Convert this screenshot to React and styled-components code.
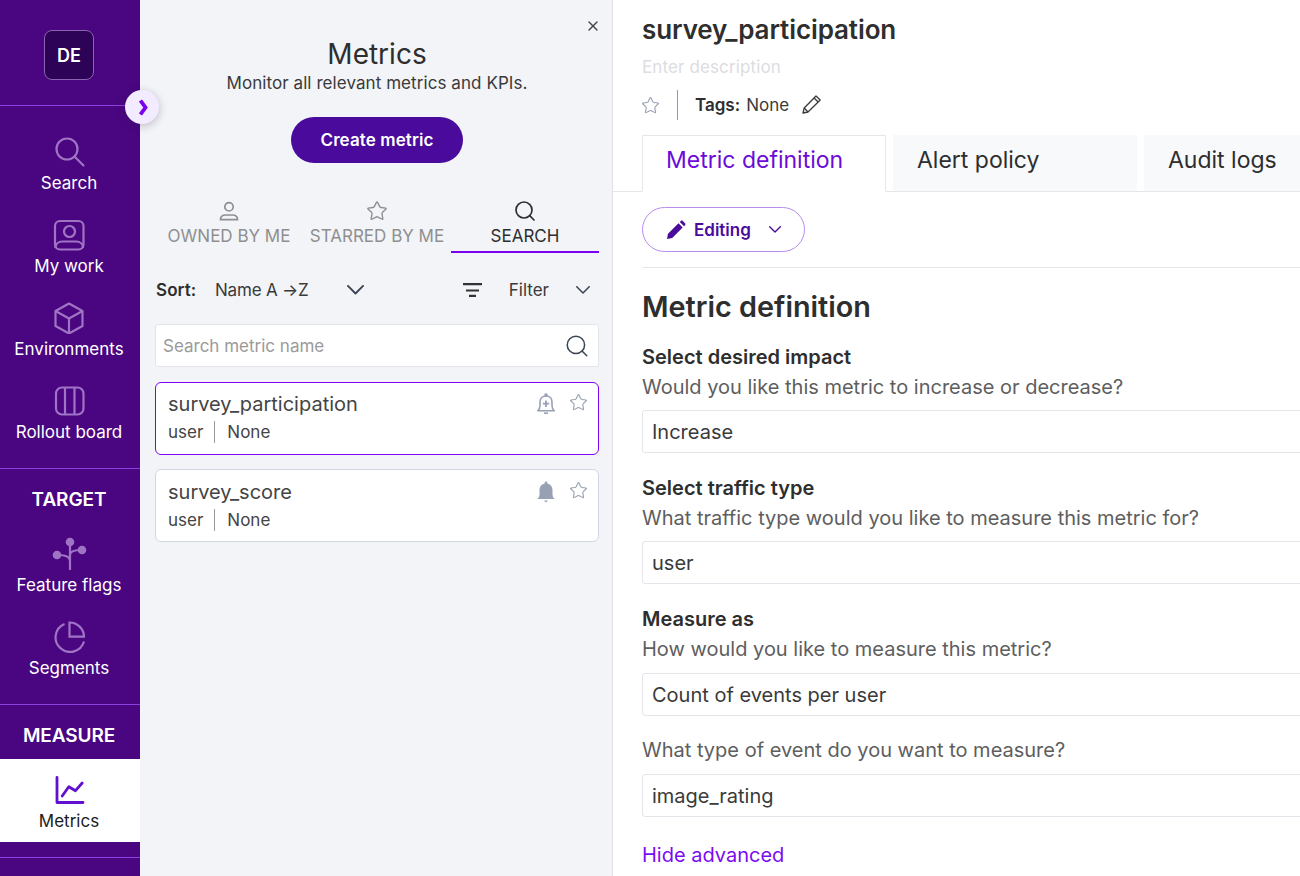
import React from "react"
import styled, { createGlobalStyle } from "styled-components"
import { Search, Star, X } from "lucide-react"

const GlobalStyle = createGlobalStyle`
  html, body {
    margin: 0;
    padding: 0;
    height: 100%;
    overflow: hidden;
    background: #fff;
    font-family: Inter, "Liberation Sans", sans-serif;
    color: #2e2e2e;
  }
  * { box-sizing: border-box; }
`

const Page = styled.div`
  display: flex;
  width: 1300px;
  height: 876px;
  overflow: hidden;
`

const Sidebar = styled.nav`
  position: relative;
  z-index: 2;
  flex: 0 0 140px;
  display: flex;
  flex-direction: column;
  background: #4a0681;
  color: #fff;
`

const LogoArea = styled.div`
  height: 106px;
  padding: 30px 2px 0 0;
  display: flex;
  justify-content: center;
  border-bottom: 1px solid #8a3fe0;
`

const Logo = styled.div`
  width: 50px;
  height: 50px;
  display: flex;
  align-items: center;
  justify-content: center;
  border: 1px solid #8a62ad;
  border-radius: 8px;
  background: #2c0356;
  font-size: 18px;
  font-weight: 600;
`

const Toggle = styled.div`
  position: absolute;
  top: 90px;
  left: 125px;
  width: 34px;
  height: 34px;
  padding-left: 2px;
  display: flex;
  align-items: center;
  justify-content: center;
  border-radius: 50%;
  background: #f3ebff;
  box-shadow: 0 2px 8px rgba(30, 20, 60, 0.25);
`

const NavGroup = styled.div`
  padding-top: ${(p) => p.$top || 0}px;
  padding-bottom: ${(p) => p.$bottom || 0}px;
  border-bottom: ${(p) => (p.$line ? "1px solid #8a3fe0" : "none")};
`

const NavItem = styled.div`
  height: 83px;
  display: flex;
  flex-direction: column;
  align-items: center;
  padding: 11px 2px 0 0;
  background: ${(p) => (p.$active ? "#fff" : "transparent")};
  color: ${(p) => (p.$active ? "#1c1c1c" : "#fff")};
  font-size: 17px;
  line-height: 20px;
`

const NavIcon = styled.div`
  width: 36px;
  height: 36px;
  margin-bottom: 5px;
  color: ${(p) => (p.$active ? "#5f10d0" : "#a074c4")};
`

const SectionTitle = styled.div`
  height: 54px;
  padding: 20px 2px 0 0;
  text-align: center;
  font-size: 19px;
  line-height: 22px;
  font-weight: 600;
  letter-spacing: -0.1px;
`

const Panel = styled.section`
  position: relative;
  flex: 0 0 473px;
  padding: 0 13px 0 15px;
  background: #f2f4f8;
  border-right: 1px solid #dfe1e6;
`

const CloseButton = styled.div`
  position: absolute;
  top: 18px;
  right: 11px;
  color: #444;
  display: flex;
`

const PanelHead = styled.header`
  padding-top: 36px;
  display: flex;
  flex-direction: column;
  align-items: center;
`

const PanelTitle = styled.h2`
  margin: 0;
  font-size: 28px;
  line-height: 36px;
  font-weight: 400;
  color: #2e2e2e;
`

const PanelSub = styled.p`
  margin: 0;
  font-size: 17px;
  line-height: 22px;
  letter-spacing: 0.07px;
  color: #3a3a3a;
`

const CreateButton = styled.button`
  margin-top: 23px;
  width: 172px;
  height: 46px;
  border: none;
  border-radius: 23px;
  background: #4a0a9c;
  color: #fff;
  font-family: inherit;
  font-size: 17px;
  letter-spacing: 0.1px;
  font-weight: 600;
`

const Tabs = styled.div`
  display: grid;
  grid-template-columns: repeat(3, 148px);
  margin-top: 37px;
`

const Tab = styled.div`
  height: 53px;
  display: flex;
  flex-direction: column;
  align-items: center;
  border-bottom: 2px solid ${(p) => (p.$active ? "#7a00f0" : "transparent")};
  color: ${(p) => (p.$active ? "#2e2e2e" : "#8f8f8f")};
  font-size: 17px;
  line-height: 20px;
`

const TabIcon = styled.div`
  height: 22px;
  margin-bottom: 4px;
  display: flex;
  align-items: center;
`

const SortRow = styled.div`
  height: 36px;
  margin-top: 19px;
  padding: 0 9px 0 1px;
  display: flex;
  align-items: center;
  font-size: 17px;
  color: #3a3a3a;
`

const SortLabel = styled.b`
  font-weight: 600;
  width: 59px;
  letter-spacing: 0.1px;
  color: #2e2e2e;
`

const SortValue = styled.span`
  width: 132px;
  letter-spacing: -0.2px;
`

const Spacer = styled.div`
  flex: 1;
`

const FilterText = styled.span`
  margin: 0 27px;
`

const SearchBox = styled.div`
  height: 43px;
  margin-top: 16px;
  padding: 1px 8px 0 7px;
  display: flex;
  align-items: center;
  justify-content: space-between;
  background: #fff;
  border: 1px solid #e3e5ea;
  border-radius: 3px;
  font-size: 17px;
  color: #9a9a9a;
`

const Card = styled.div`
  height: 73px;
  margin-top: ${(p) => p.$top}px;
  padding: ${(p) => (p.$active ? 9 : 10)}px 10px 0 12px;
  background: #fff;
  border: 1px solid ${(p) => (p.$active ? "#8000f0" : "#d3d6e0")};
  border-radius: 6px;
`

const CardTop = styled.div`
  display: flex;
  align-items: center;
  height: 24px;
  gap: 14px;
  font-size: 20px;
  color: #444;
`

const CardName = styled.span`
  flex: 1;
`

const CardStar = styled.span`
  display: flex;
  margin-top: -3px;
`

const CardMeta = styled.div`
  display: flex;
  align-items: center;
  margin-top: 5px;
  font-size: 17px;
  line-height: 22px;
  color: #444;
`

const MetaDivider = styled.span`
  width: 1px;
  height: 22px;
  margin: 0 12px 0 11px;
  background: #9a9a9a;
`

const Main = styled.main`
  flex: 1;
  min-width: 0;
  overflow: hidden;
  background: #fff;
`

const MainHead = styled.div`
  padding: 14px 0 0 29px;
`

const MetricName = styled.h1`
  margin: 0;
  font-size: 26px;
  line-height: 32px;
  letter-spacing: -0.1px;
  font-weight: 600;
  color: #2e2e2e;
`

const Description = styled.div`
  margin-top: 9px;
  font-size: 17px;
  line-height: 24px;
  letter-spacing: 0.12px;
  color: #dcdce2;
`

const TagRow = styled.div`
  display: flex;
  align-items: center;
  height: 30px;
  margin: 11px 0 0 -1px;
  font-size: 17px;
  color: #3a3a3a;
`

const TagDivider = styled.span`
  width: 1px;
  height: 30px;
  margin: 0 17px;
  background: #9a9a9a;
`

const TagLabel = styled.b`
  font-weight: 600;
  margin-right: 6px;
  color: #2e2e2e;
`

const TagEdit = styled.span`
  display: flex;
  margin: -2px 0 0 13px;
`

const MainTabs = styled.div`
  display: flex;
  gap: 7px;
  height: 57px;
  margin-top: 15px;
  padding-left: 29px;
  border-bottom: 1px solid #e4e6ea;
`

const MainTab = styled.div`
  flex: 0 0 244px;
  height: ${(p) => (p.$active ? 57 : 56)}px;
  padding: ${(p) => (p.$active ? "9px 0 0 23px" : "10px 0 0 24px")};
  font-size: 23px;
  line-height: 30px;
  background: ${(p) => (p.$active ? "#fff" : "#f8f9fb")};
  border: ${(p) => (p.$active ? "1px solid #e4e6ea" : "none")};
  border-bottom: ${(p) => (p.$active ? "1px solid #fff" : "none")};
  color: ${(p) => (p.$active ? "#6a0bd8" : "#2e2e2e")};
`

const Toolbar = styled.div`
  margin-left: 29px;
  height: 76px;
  padding-top: 15px;
  border-bottom: 1px solid #e4e6ea;
`

const EditButton = styled.div`
  width: 163px;
  height: 45px;
  display: flex;
  align-items: center;
  padding-left: 23px;
  gap: 8px;
  border: 1px solid #b98cf0;
  border-radius: 23px;
  color: #4a0a9c;
  font-size: 17px;
  font-weight: 600;
`

const EditCaret = styled.span`
  display: flex;
  margin-left: 10px;
`

const Form = styled.div`
  padding: 21px 0 0 29px;
`

const FormTitle = styled.h2`
  margin: 0 0 17px;
  font-size: 28.8px;
  line-height: 36px;
  font-weight: 600;
  color: #2e2e2e;
`

const FieldLabel = styled.div`
  font-size: 20px;
  line-height: 30px;
  font-weight: 600;
  color: #2e2e2e;
`

const FieldHint = styled.div`
  font-size: 20px;
  line-height: 30px;
  color: #5e5e5e;
`

const Field = styled.div`
  height: 43px;
  margin: ${(p) => p.$before}px 0 ${(p) => p.$after}px;
  width: 700px;
  padding-left: 9px;
  display: flex;
  align-items: center;
  border: 1px solid #e3e5ea;
  border-radius: 3px;
  font-size: 20px;
  color: #3a3a3a;
`

const TextLink = styled.div`
  font-size: 20px;
  line-height: 24px;
  color: #7a0cf0;
`

const NavGap = styled.div`
  height: 15px;
`

const SearchGlyph = () => (
  <svg width="36" height="36" viewBox="0 0 36 36" fill="none" stroke="currentColor" strokeWidth="2.2">
    <circle cx="16" cy="17" r="10.500" />
    <path d="M24 25l8.500 8.500" strokeLinecap="round" />
  </svg>
)

const WorkGlyph = () => (
  <svg width="36" height="36" viewBox="0 0 36 36" fill="none" stroke="currentColor" strokeWidth="2.2">
    <rect x="4" y="6" width="28.500" height="28.500" rx="5" />
    <circle cx="18.500" cy="16.500" r="5.500" />
    <path d="M4.500 33c0-4 3-6.500 7-6.500h13.500c4 0 7 2.500 7 6.500" />
  </svg>
)

const BoxGlyph = () => (
  <svg width="36" height="36" viewBox="0 0 36 36" fill="none" stroke="currentColor" strokeWidth="2.2" strokeLinejoin="round">
    <path d="M18 5.500l13.500 7.500v15L18 35.500 4.500 28V13z" />
    <path d="M4.500 13L18 20.500 31.500 13M18 20.500v15" />
  </svg>
)

const BoardGlyph = () => (
  <svg width="36" height="36" viewBox="0 0 36 36" fill="none" stroke="currentColor" strokeWidth="2.2">
    <rect x="5" y="6.500" width="27.500" height="27" rx="6" />
    <path d="M14 6.500v27M23.500 6.500v27" />
  </svg>
)

const FlagsGlyph = () => (
  <svg width="36" height="36" viewBox="0 0 36 36" fill="none" stroke="currentColor" strokeWidth="2.2">
    <path d="M19 8v28M19 27c0-4-3-6-12-6M19 21c0-3 3-5 11-5" />
    <circle cx="19" cy="8" r="3.200" fill="currentColor" />
    <circle cx="6" cy="21" r="3.200" fill="currentColor" />
    <circle cx="31" cy="16" r="3.200" fill="currentColor" />
  </svg>
)

const PieGlyph = () => (
  <svg width="36" height="36" viewBox="0 0 36 36" fill="none" stroke="currentColor" strokeWidth="2.2">
    <path d="M13.500 7A14.500 14.500 0 1 0 33 24.500" />
    <path d="M18.500 5.500A14.500 14.500 0 0 1 33 19.700H18.500Z" />
  </svg>
)

const ChartGlyph = () => (
  <svg width="36" height="36" viewBox="0 0 36 36" fill="none" stroke="currentColor" strokeWidth="2.8" strokeLinecap="round" strokeLinejoin="round">
    <path d="M6 7.500v25h26" />
    <path d="M11.200 26l6.600-9.300 6.700 4 6.700-7.700" />
  </svg>
)

const PersonGlyph = () => (
  <svg width="20" height="20" viewBox="0 0 20 20" fill="none" stroke="currentColor" strokeWidth="1.700">
    <circle cx="10" cy="5.800" r="4.200" />
    <path d="M1.500 18.700c0-3 2-4.700 5-4.700h7c3 0 5 1.700 5 4.700z" />
  </svg>
)

const FilterGlyph = () => (
  <svg width="19" height="14" viewBox="0 0 19 14" fill="none" stroke="#333" strokeWidth="2.200">
    <path d="M0 1.200h19M3 7.500h13M6 12.800h7" />
  </svg>
)

const Caret = ({ width, color }) => (
  <svg width={width} height={(width * 10) / 18} viewBox="0 0 18 10" fill="none" stroke={color} strokeWidth="2" strokeLinecap="round" strokeLinejoin="round">
    <path d="M1 1l8 8 8-8" />
  </svg>
)

const BellPlus = () => (
  <svg width="18" height="22" viewBox="0 0 18 22" fill="none" stroke="#98a0b3" strokeWidth="1.600">
    <path d="M.800 17.800c1.700-1.500 2.200-3 2.200-5.300V9c0-3.500 2.500-6 6-6s6 2.500 6 6v3.500c0 2.300.5 3.800 2.200 5.300z" />
    <path d="M9 7.500v6.500M5.800 10.700h6.400" strokeWidth="1.800" />
    <circle cx="9" cy="2" r="1" fill="#98a0b3" />
    <path d="M7 20.200h4" />
  </svg>
)

const BellFilled = () => (
  <svg width="18" height="22" viewBox="0 0 18 22" fill="#98a0b3">
    <path d="M.500 18c1.500-1.500 2-3 2-5V9c0-3.800 2.800-6.500 6.500-6.500s6.500 2.700 6.500 6.500v4c0 2 .5 3.500 2 5z" />
    <circle cx="9" cy="2" r="1.400" />
    <path d="M7 19.500h4L9 21.500z" />
  </svg>
)

const PencilOutline = () => (
  <svg width="20" height="20" viewBox="0 0 20 20" fill="none" stroke="#3a3a3a" strokeWidth="1.300" strokeLinejoin="round">
    <path d="M1 19l1.200-5L14 2l4.200 4L6 18z" />
    <path d="M12 4l4.200 4M2.200 14L6 18" />
  </svg>
)

const PencilSolid = () => (
  <svg width="20" height="20" viewBox="0 0 20 20" fill="#4a0a9c">
    <path d="M1 19l1-5.200L12.500 3.300l4.200 4.200L6.200 18z" />
    <path d="M13.800 2l1-1c.6-.6 1.500-.6 2 0l2.200 2.200c.6.600.6 1.400 0 2l-1 1z" />
  </svg>
)

const ChevronBold = () => (
  <svg width="9" height="17" viewBox="0 0 9 17" fill="none" stroke="#7a00f0" strokeWidth="3.800">
    <path d="M1.500 1.500L6.500 8.500l-5 7" />
  </svg>
)

const topNav = [
  { label: "Search", icon: <SearchGlyph /> },
  { label: "My work", icon: <WorkGlyph /> },
  { label: "Environments", icon: <BoxGlyph /> },
  { label: "Rollout board", icon: <BoardGlyph /> },
]

const targetNav = [
  { label: "Feature flags", icon: <FlagsGlyph /> },
  { label: "Segments", icon: <PieGlyph /> },
]

const fields = [
  { label: "Select desired impact", hint: "Would you like this metric to increase or decrease?", value: "Increase", before: 8, after: 20 },
  { label: "Select traffic type", hint: "What traffic type would you like to measure this metric for?", value: "user", before: 8, after: 20 },
  { label: "Measure as", hint: "How would you like to measure this metric?", value: "Count of events per user", before: 9, after: 19 },
  { hint: "What type of event do you want to measure?", value: "image_rating", before: 9, after: 26 },
]

const renderNav = (items) =>
  items.map((item) => (
    <NavItem key={item.label}>
      <NavIcon>{item.icon}</NavIcon>
      {item.label}
    </NavItem>
  ))

export default function App() {
  return (
    <Page>
      <GlobalStyle />
      <Sidebar>
        <LogoArea>
          <Logo>DE</Logo>
        </LogoArea>
        <Toggle>
          <ChevronBold />
        </Toggle>
        <NavGroup $top={15} $line>
          {renderNav(topNav)}
          <NavGap />
        </NavGroup>
        <NavGroup $line>
          <SectionTitle>TARGET</SectionTitle>
          {renderNav(targetNav)}
          <NavGap />
        </NavGroup>
        <NavGroup>
          <SectionTitle>MEASURE</SectionTitle>
          <NavItem $active>
            <NavIcon $active>
              <ChartGlyph />
            </NavIcon>
            Metrics
          </NavItem>
        </NavGroup>
        <NavGroup $top={15} $line />
      </Sidebar>

      <Panel>
        <CloseButton>
          <X size={16} />
        </CloseButton>
        <PanelHead>
          <PanelTitle>Metrics</PanelTitle>
          <PanelSub>Monitor all relevant metrics and KPIs.</PanelSub>
          <CreateButton>Create metric</CreateButton>
        </PanelHead>
        <Tabs>
          <Tab>
            <TabIcon>
              <PersonGlyph />
            </TabIcon>
            OWNED BY ME
          </Tab>
          <Tab>
            <TabIcon>
              <Star size={22} strokeWidth={1.5} />
            </TabIcon>
            STARRED BY ME
          </Tab>
          <Tab $active>
            <TabIcon>
              <Search size={24} strokeWidth={1.7} />
            </TabIcon>
            SEARCH
          </Tab>
        </Tabs>
        <SortRow>
          <SortLabel>Sort:</SortLabel>
          <SortValue>Name A →Z</SortValue>
          <Caret width={17} color="#3b4654" />
          <Spacer />
          <FilterGlyph />
          <FilterText>Filter</FilterText>
          <Caret width={14} color="#3b4654" />
        </SortRow>
        <SearchBox>
          Search metric name
          <Search size={26} strokeWidth={1.4} color="#3b4654" />
        </SearchBox>
        <Card $active $top={15}>
          <CardTop>
            <CardName>survey_participation</CardName>
            <BellPlus />
            <CardStar>
              <Star size={19} strokeWidth={1.4} color="#98a0b3" />
            </CardStar>
          </CardTop>
          <CardMeta>
            user
            <MetaDivider />
            None
          </CardMeta>
        </Card>
        <Card $top={14}>
          <CardTop>
            <CardName>survey_score</CardName>
            <BellFilled />
            <CardStar>
              <Star size={19} strokeWidth={1.4} color="#98a0b3" />
            </CardStar>
          </CardTop>
          <CardMeta>
            user
            <MetaDivider />
            None
          </CardMeta>
        </Card>
      </Panel>

      <Main>
        <MainHead>
          <MetricName>survey_participation</MetricName>
          <Description>Enter description</Description>
          <TagRow>
            <Star size={19} strokeWidth={1.4} color="#98a0b3" />
            <TagDivider />
            <TagLabel>Tags:</TagLabel>
            None
            <TagEdit>
              <PencilOutline />
            </TagEdit>
          </TagRow>
        </MainHead>
        <MainTabs>
          <MainTab $active>Metric definition</MainTab>
          <MainTab>Alert policy</MainTab>
          <MainTab>Audit logs</MainTab>
        </MainTabs>
        <Toolbar>
          <EditButton>
            <PencilSolid />
            Editing
            <EditCaret>
              <Caret width={12} color="#4a0a9c" />
            </EditCaret>
          </EditButton>
        </Toolbar>
        <Form>
          <FormTitle>Metric definition</FormTitle>
          {fields.map((field) => (
            <div key={field.value}>
              {field.label && <FieldLabel>{field.label}</FieldLabel>}
              <FieldHint>{field.hint}</FieldHint>
              <Field $before={field.before} $after={field.after}>
                {field.value}
              </Field>
            </div>
          ))}
          <TextLink>Hide advanced</TextLink>
        </Form>
      </Main>
    </Page>
  )
}
